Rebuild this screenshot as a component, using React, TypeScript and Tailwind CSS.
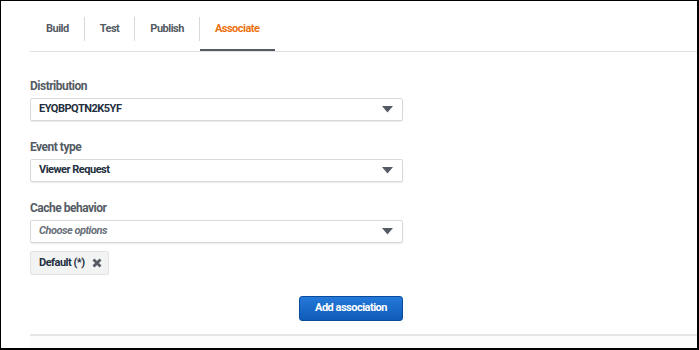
import { useState } from "react";

const font = { fontFamily: 'Roboto, "Liberation Sans", sans-serif' };

function Caret() {
  return (
    <svg width="11" height="7" viewBox="0 0 11 7" className="shrink-0">
      <path d="M0 0 L11 0 L5.5 6.5 Z" fill="#545b64" />
    </svg>
  );
}

function Select({ value, placeholder }: { value?: string; placeholder?: string }) {
  return (
    <div className="flex h-[23px] w-[373px] items-center justify-between rounded-[2px] border border-[#d5dbdb] bg-white pl-[8px] pr-[9px] shadow-[0_1px_1px_rgba(0,0,0,0.08)]">
      {value ? (
        <span className="text-[11px] font-bold tracking-[-0.5px] text-[#232f3e]">{value}</span>
      ) : (
        <span className="text-[11px] font-bold italic tracking-[-0.5px] text-[#687078]">{placeholder}</span>
      )}
      <Caret />
    </div>
  );
}

function Field({ label, children }: { label: string; children: React.ReactNode }) {
  return (
    <div className="flex flex-col gap-[5px]">
      <label className="text-[12px] font-bold leading-[14px] tracking-[-0.5px] text-[#545b64]">{label}</label>
      {children}
    </div>
  );
}

export default function App() {
  const [tab, setTab] = useState("Associate");
  const tabs = ["Build", "Test", "Publish", "Associate"];

  return (
    <div style={font} className="h-[350px] w-[699px] overflow-hidden bg-black">
      <div className="ml-[1px] mt-[1px] flex h-[347px] w-[696px] flex-col bg-white">
        {/* Tabs */}
        <div className="ml-[29px] mt-[15px] flex border-b border-[#e0e0e0]">
          {tabs.map((t, i) => (
            <button key={t} onClick={() => setTab(t)} className="flex h-[35px] items-start">
              <span className={`mt-[1px] h-[24px] ${i > 0 ? "border-l border-[#d5dbdb]" : ""}`} />
              <span
                className={`flex h-[35px] items-start px-[15px] pt-[5px] text-[11px] font-bold tracking-[-0.5px] ${
                  tab === t ? "border-b-2 border-[#545b64] text-[#ec7211]" : "text-[#545b64]"
                } ${i === 0 ? "pl-[16px]" : ""}`}
              >
                {t}
              </span>
            </button>
          ))}
        </div>

        {/* Form */}
        <div className="ml-[29px] mt-[27px] flex w-[373px] flex-col gap-[19px]">
          <Field label="Distribution">
            <Select value="EYQBPQTN2K5YF" />
          </Field>
          <Field label="Event type">
            <Select value="Viewer Request" />
          </Field>
          <Field label="Cache behavior">
            <Select placeholder="Choose options" />
            <div className="mt-[3px] flex h-[24px] w-fit items-center gap-[7px] whitespace-nowrap rounded-[2px] border border-[#e3e3e3] bg-[#f2f3f3] pl-[8px] pr-[6px]">
              <span className="text-[11px] font-bold tracking-[-0.5px] text-[#232f3e]">Default (*)</span>
              <svg width="10" height="10" viewBox="0 0 10 10">
                <path d="M1.5 1.5 L8.5 8.5 M8.5 1.5 L1.5 8.5" stroke="#545b64" strokeWidth="2.8" />
              </svg>
            </div>
          </Field>
        </div>

        <div className="ml-[29px] mt-[21px] flex w-[373px] justify-end">
          <button className="h-[25px] w-[104px] rounded-[3px] border border-[#0a4a9c] bg-gradient-to-b from-[#2479d9] to-[#0f5cb8] text-[11px] font-bold tracking-[-0.5px] text-white">
            Add association
          </button>
        </div>

        <div className="ml-[29px] mt-[13px] flex-1 border-t-2 border-[#e6e6e6] bg-[#fcfcfc]" />
      </div>
    </div>
  );
}
